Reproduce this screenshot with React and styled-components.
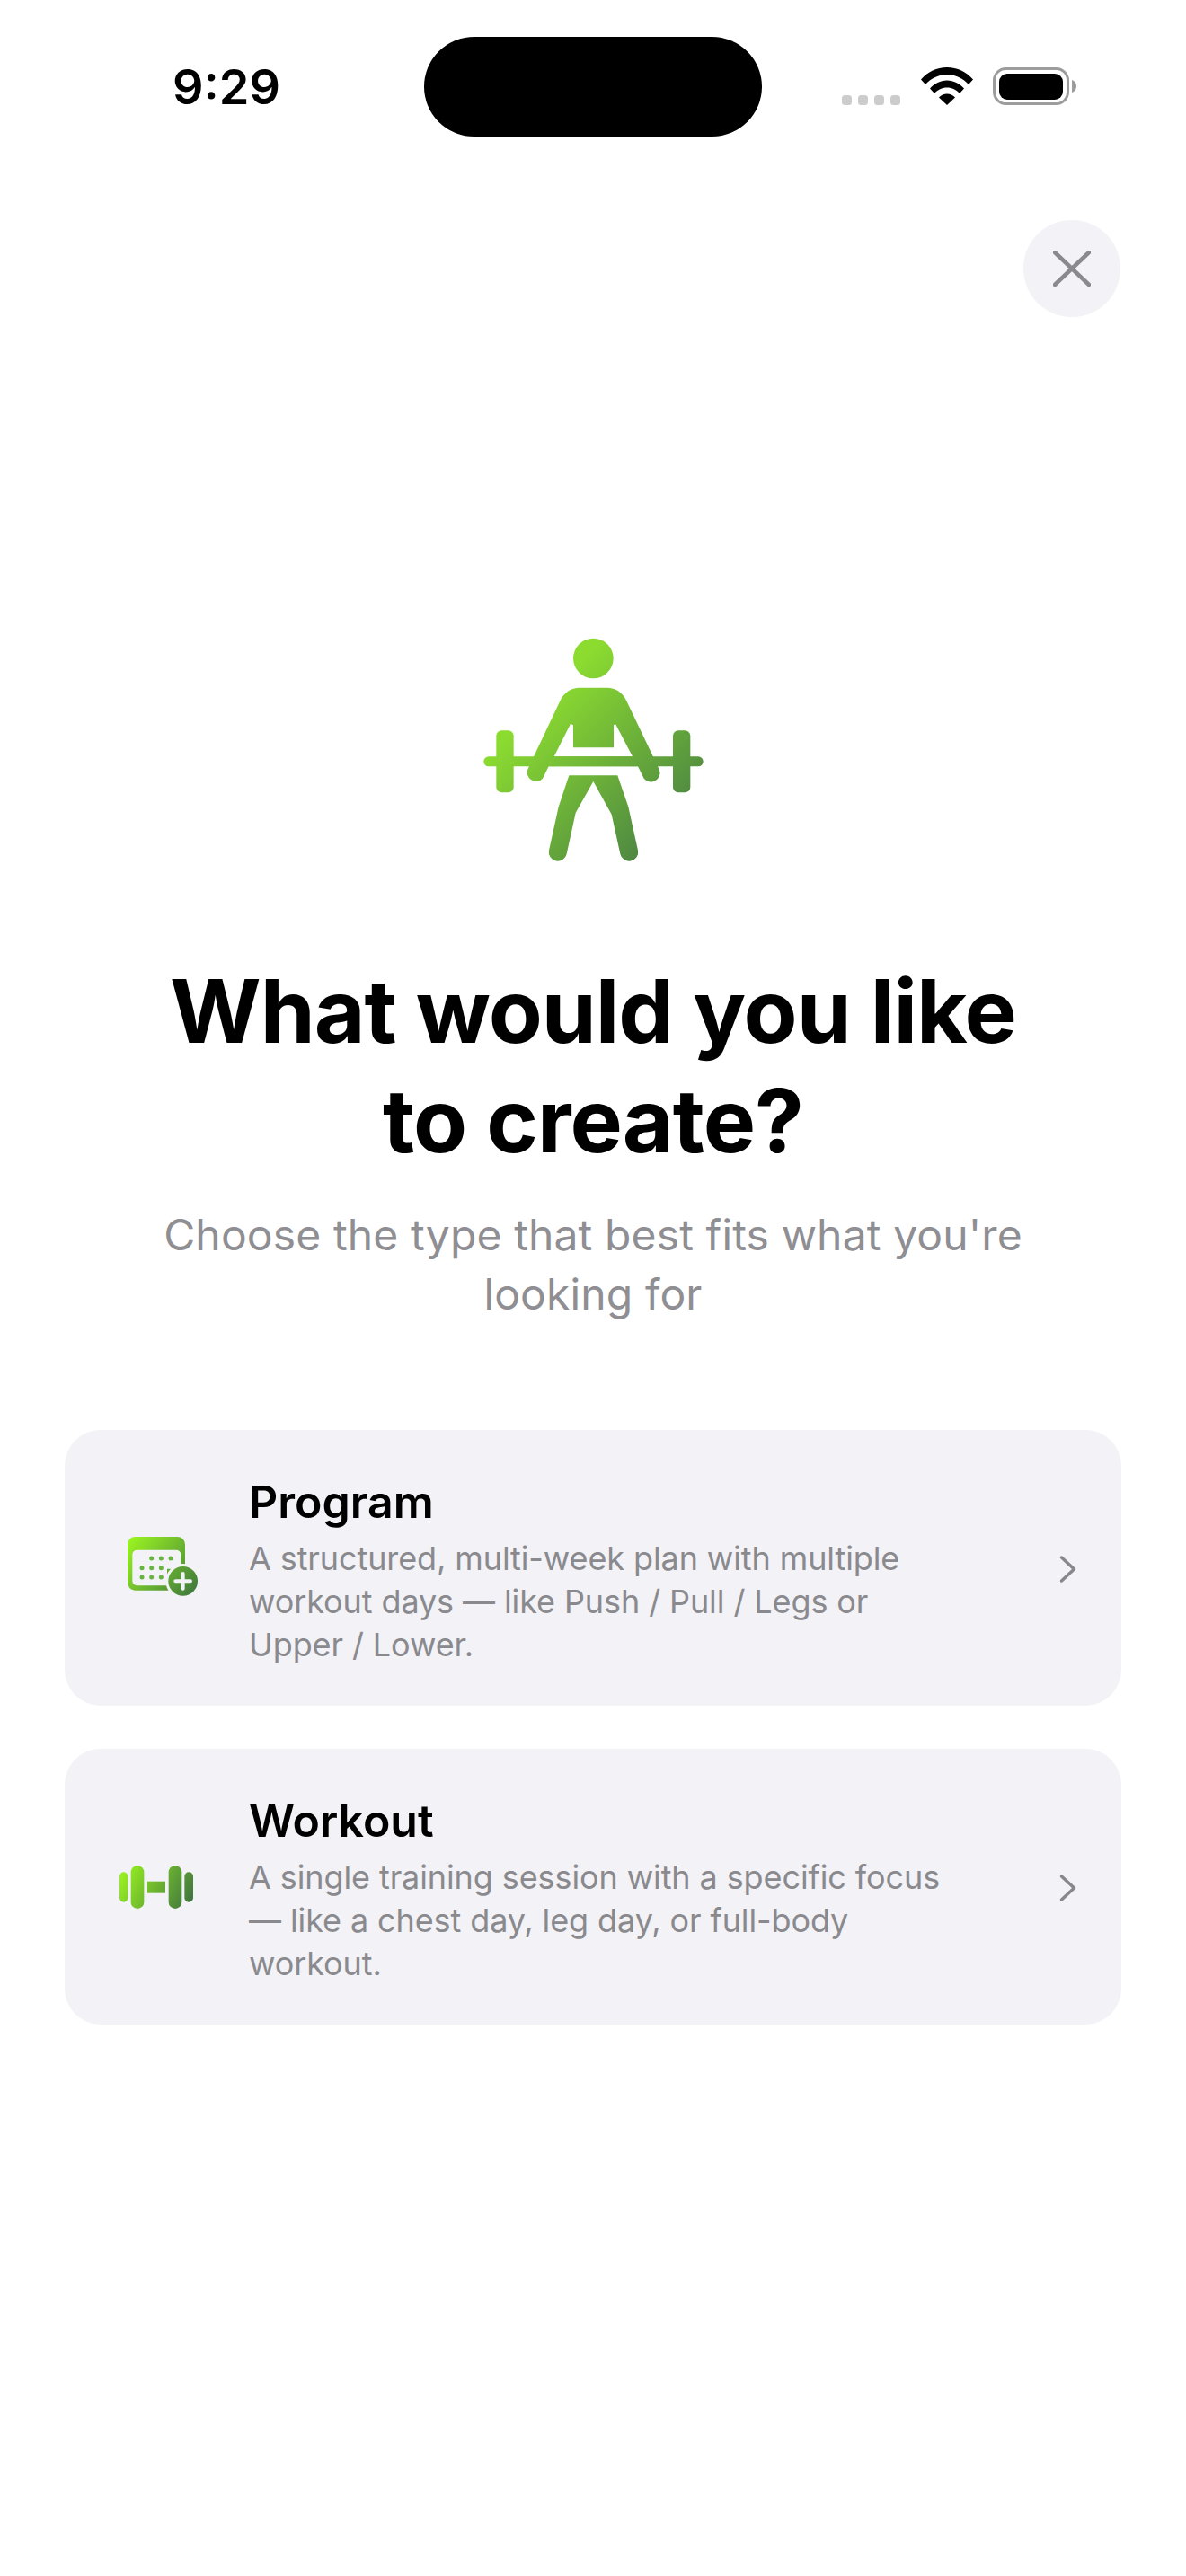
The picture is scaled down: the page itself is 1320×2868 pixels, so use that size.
import React from 'react'
import styled, { createGlobalStyle } from 'styled-components'

const GlobalStyle = createGlobalStyle`
  html, body { margin: 0; padding: 0; background: #fff; }
  body { font-family: Inter, "Liberation Sans", sans-serif; }
`

const Page = styled.div`
  width: 1320px;
  height: 2868px;
  background: #fff;
  display: flex;
  flex-direction: column;
  overflow: hidden;
`

const StatusBar = styled.div`
  display: grid;
  grid-template-columns: 472px 376px 1fr;
  align-items: center;
  padding-top: 41px;
`

const Time = styled.div`
  padding-left: 192px;
  font-size: 54px;
  font-weight: 600;
  color: #000;
  line-height: 111px;
`

const Island = styled.div`
  height: 111px;
  background: #000;
  border-radius: 56px;
`

const StatusIcons = styled.div`
  padding-left: 89px;
  height: 42px;
  display: flex;
  margin-top: -1px;
`

const CloseRow = styled.div`
  display: flex;
  justify-content: flex-end;
  padding: 93px 73px 0 0;
`

const CloseButton = styled.div`
  width: 108px;
  height: 108px;
  border-radius: 50%;
  background: #f2f2f7;
  display: flex;
  align-items: center;
  justify-content: center;
`

const Hero = styled.div`
  margin-top: 327px;
  display: flex;
  justify-content: center;
`

const Title = styled.h1`
  margin: 85px 0 0;
  font-size: 98px;
  line-height: 122px;
  font-weight: 700;
  letter-spacing: -1px;
  text-align: center;
  color: #000;
`

const Subtitle = styled.p`
  margin: 33px 0 0;
  font-size: 48px;
  line-height: 66px;
  font-weight: 400;
  letter-spacing: 0.13px;
  text-align: center;
  color: #8e8e93;
`

const CardList = styled.div`
  margin-top: 118px;
  padding: 0 72px;
  display: flex;
  flex-direction: column;
  gap: 48px;
`

const Card = styled.div`
  height: 307px;
  background: #f2f2f7;
  border-radius: 40px;
  display: flex;
  align-items: center;
`

const IconSlot = styled.div`
  width: 205px;
  flex-shrink: 0;
  padding-left: ${(p) => p.$inset}px;
  margin-top: ${(p) => p.$lift || 0}px;
  box-sizing: border-box;
  display: flex;
  align-items: center;
`

const CardText = styled.div`
  flex: 1;
  padding-top: 6px;
`

const CardTitle = styled.div`
  font-size: 50px;
  line-height: 60px;
  font-weight: 600;
  color: #000;
`

const CardDescription = styled.div`
  margin-top: 9px;
  width: 800px;
  font-size: 36px;
  line-height: 48px;
  letter-spacing: -0.1px;
  color: #8a8a8e;
`

const Chevron = styled.div`
  width: 69px;
  flex-shrink: 0;
  display: flex;
  padding-top: 2px;
`

const Signal = () => (
  <svg width="66" height="42" viewBox="0 0 66 42">
    {[0, 18, 36, 54].map((x) => (
      <rect key={x} x={x} y="31" width="11" height="11" rx="3.5" fill="#ccc" />
    ))}
  </svg>
)

const Wifi = () => (
  <svg width="58" height="42" viewBox="0 0 58 42" style={{ marginLeft: 22 }}>
    <path d="M0 13.5C7.5 5 17.5 0 29 0s21.5 5 29 13.5l-5 5.5C46.5 12 38.5 8 29 8S11.5 12 5 19z" fill="#000" />
    <path d="M10 23.5C15 18 21.5 14.5 29 14.5S43 18 48 23.5l-5 5.5C39.5 25 34.5 22.5 29 22.5S18.5 25 15 29z" fill="#000" />
    <path d="M20 33.5C22.5 31 25.5 29.5 29 29.5s6.500 1.500 9 4L29 42z" fill="#000" />
  </svg>
)

const Battery = () => (
  <svg width="94" height="42" viewBox="0 0 94 42" style={{ marginLeft: 22 }}>
    <rect x="1.500" y="1.500" width="82" height="39" rx="13" fill="none" stroke="#9c9c9c" strokeWidth="3" />
    <rect x="7" y="7" width="71" height="29" rx="9" fill="#000" />
    <path d="M88 14c3 .8 5 3.500 5 7s-2 6.200-5 7z" fill="#9c9c9c" />
  </svg>
)

const CloseIcon = () => (
  <svg width="42" height="40" viewBox="0 0 42 40">
    <path d="M2 2l38 36M40 2L2 38" stroke="#8a8a8e" strokeWidth="4.500" strokeLinecap="round" fill="none" />
  </svg>
)

// lifter drawn in the coordinates of a 3x crop, so 960x900 maps onto 320x300
const LifterIcon = () => (
  <svg width="320" height="300" viewBox="0 0 960 900">
    <defs>
      <linearGradient id="lifterGrad" gradientUnits="userSpaceOnUse" x1="300" y1="300" x2="800" y2="800">
        <stop offset="0" stopColor="#8cdc30" />
        <stop offset="1" stopColor="#447a45" />
      </linearGradient>
    </defs>
    <g fill="url(#lifterGrad)">
      <circle cx="481" cy="159" r="67" />
      <path
        fillRule="evenodd"
        d="M435 257H527C555 257 577 272 590 297L702 532A30 30 0 0 1 650 560L630 520H332L312 560A30 30 0 0 1 261 532L372 297C385 272 407 257 435 257ZM405 378L350 487H612L555 378L549 382V457H414V382Z"
      />
      <rect x="115" y="487" width="733" height="33" rx="16.500" />
      <rect x="157" y="400" width="58" height="207" rx="18" />
      <rect x="747" y="400" width="58" height="207" rx="18" />
      <path d="M400 550H562L598 655L630 800A30 30 0 0 1 571 812L542 680L481 570L422 675L392 812A30 30 0 0 1 333 800L365 655Z" />
    </g>
  </svg>
)

const CalendarIcon = () => (
  <svg width="78" height="66" viewBox="246 393 234 198">
    <defs>
      <linearGradient id="calGrad" gradientUnits="userSpaceOnUse" x1="246" y1="393" x2="480" y2="590">
        <stop offset="0" stopColor="#9df81f" />
        <stop offset="1" stopColor="#3c7440" />
      </linearGradient>
    </defs>
    <path
      fillRule="evenodd"
      fill="url(#calGrad)"
      d="M271 393H413A25 25 0 0 1 438 418V520H385V572H271A25 25 0 0 1 246 547V418A25 25 0 0 1 271 393ZM277 437A15 15 0 0 0 262 452V541A15 15 0 0 0 277 556H378V500H424V452A15 15 0 0 0 409 437Z"
    />
    <g fill="#68b43e">
      <circle cx="326" cy="465" r="7.500" />
      <circle cx="358" cy="465" r="7.500" />
      <circle cx="390" cy="465" r="7.500" />
      <circle cx="294" cy="497" r="7.500" />
      <circle cx="326" cy="497" r="7.500" />
      <circle cx="358" cy="497" r="7.500" />
      <circle cx="294" cy="528" r="7.500" />
      <circle cx="326" cy="528" r="7.500" />
      <circle cx="358" cy="528" r="7.500" />
    </g>
    <circle cx="431" cy="541" r="58" fill="#f2f2f7" />
    <circle cx="431" cy="541" r="49" fill="url(#calGrad)" />
    <path d="M431 516V566M406 541H456" stroke="#f2f2f7" strokeWidth="12" strokeLinecap="round" />
  </svg>
)

const DumbbellIcon = () => (
  <svg width="82" height="48" viewBox="219 294 246 144">
    <defs>
      <linearGradient id="dumbGrad" gradientUnits="userSpaceOnUse" x1="219" y1="300" x2="465" y2="432">
        <stop offset="0" stopColor="#9df81f" />
        <stop offset="1" stopColor="#3c7040" />
      </linearGradient>
    </defs>
    <g fill="url(#dumbGrad)">
      <rect x="219" y="316" width="28" height="100" rx="14" />
      <rect x="257" y="294" width="44" height="144" rx="22" />
      <rect x="312" y="347" width="60" height="39" />
      <rect x="383" y="294" width="44" height="144" rx="22" />
      <rect x="436" y="316" width="29" height="100" rx="14" />
    </g>
  </svg>
)

const ChevronIcon = () => (
  <svg width="20" height="32" viewBox="0 0 20 32">
    <path d="M2.500 3L16.500 16L2.500 29" stroke="#88888c" strokeWidth="3.500" strokeLinecap="round" strokeLinejoin="round" fill="none" />
  </svg>
)

const options = [
  {
    title: 'Program',
    description: 'A structured, multi-week plan with multiple workout days — like Push / Pull / Legs or Upper / Lower.',
    icon: <CalendarIcon />,
    inset: 70,
    lift: -3,
  },
  {
    title: 'Workout',
    description: 'A single training session with a specific focus — like a chest day, leg day, or full-body workout.',
    icon: <DumbbellIcon />,
    inset: 61,
  },
]

export default function App() {
  return (
    <>
      <GlobalStyle />
      <Page>
        <StatusBar>
          <Time>9:29</Time>
          <Island />
          <StatusIcons>
            <Signal />
            <Wifi />
            <Battery />
          </StatusIcons>
        </StatusBar>
        <CloseRow>
          <CloseButton>
            <CloseIcon />
          </CloseButton>
        </CloseRow>
        <Hero>
          <LifterIcon />
        </Hero>
        <Title>
          What would you like
          <br />
          to create?
        </Title>
        <Subtitle>
          Choose the type that best fits what you're
          <br />
          looking for
        </Subtitle>
        <CardList>
          {options.map((o) => (
            <Card key={o.title}>
              <IconSlot $inset={o.inset} $lift={o.lift}>{o.icon}</IconSlot>
              <CardText>
                <CardTitle>{o.title}</CardTitle>
                <CardDescription>{o.description}</CardDescription>
              </CardText>
              <Chevron>
                <ChevronIcon />
              </Chevron>
            </Card>
          ))}
        </CardList>
      </Page>
    </>
  )
}
